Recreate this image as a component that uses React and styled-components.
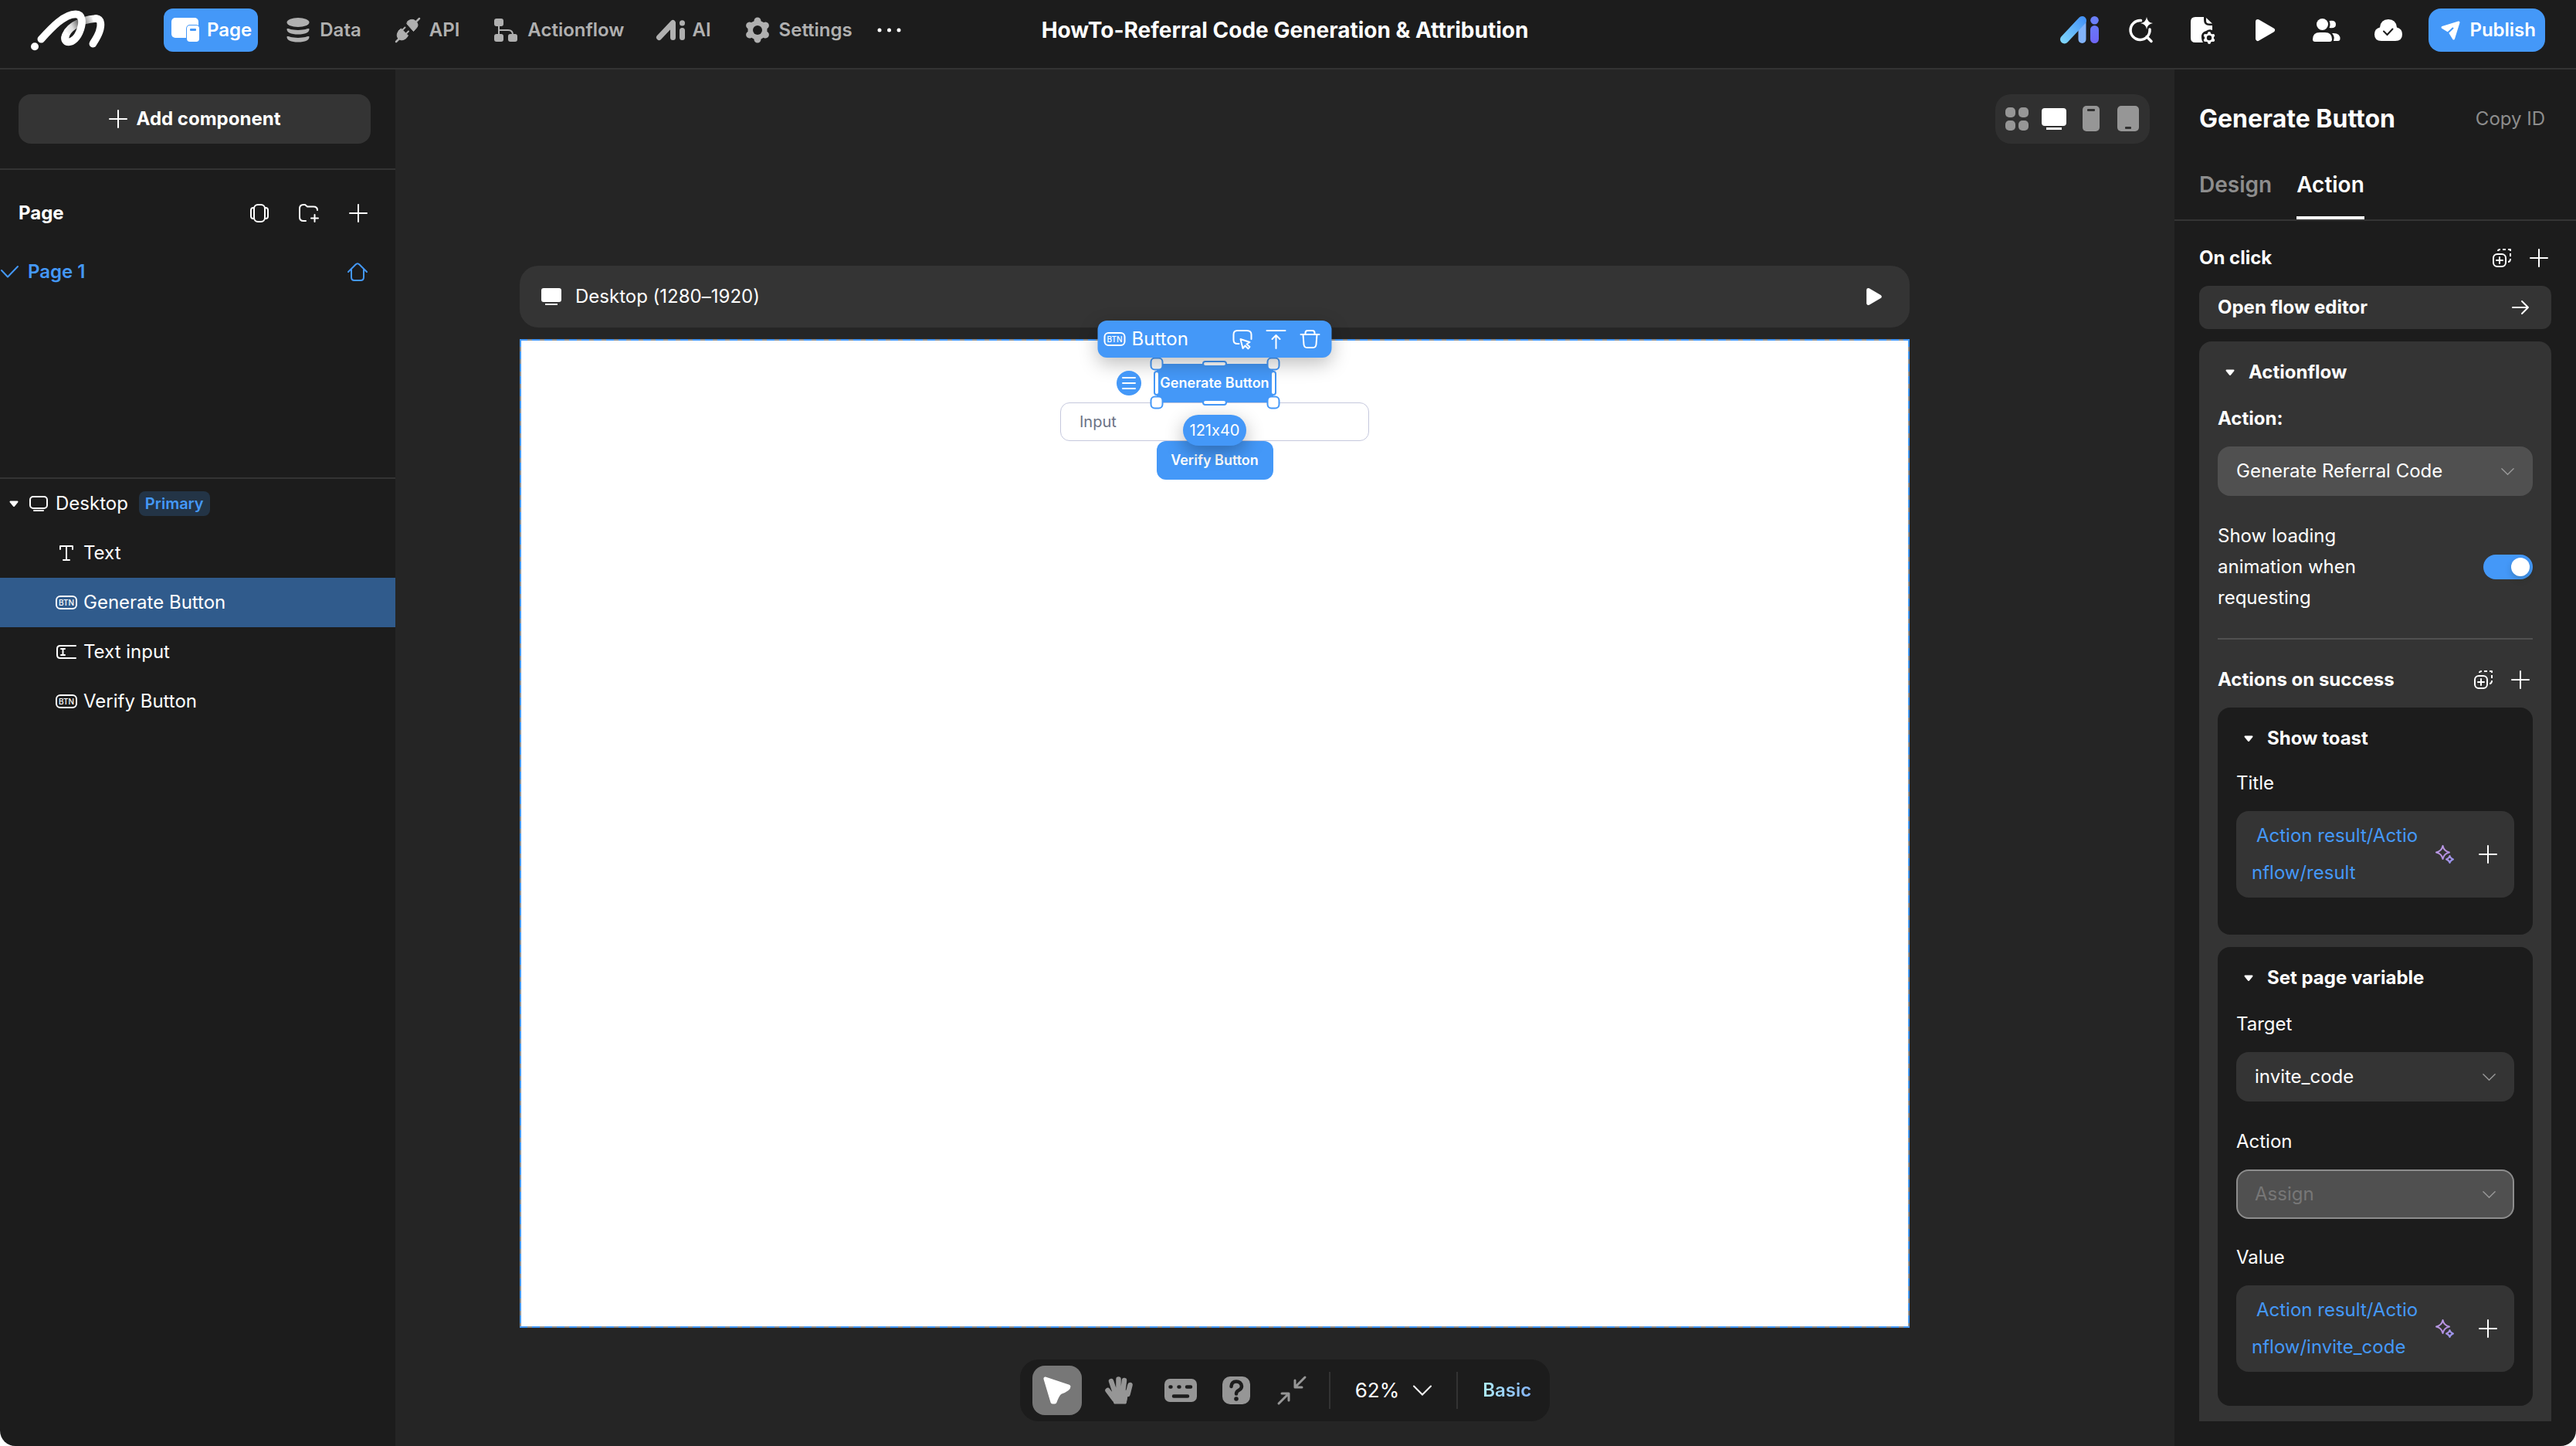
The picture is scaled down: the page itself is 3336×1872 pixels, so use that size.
import React from 'react';
import styled, { createGlobalStyle } from 'styled-components';

const GlobalStyle = createGlobalStyle`
  * {
    box-sizing: border-box;
  }

  body {
    margin: 0;
    background: #fff;
    color: #fff;
    font-family: Inter, 'Open Sans', sans-serif;
    font-size: 24px;
    font-feature-settings: 'calt' 0;
    line-height: 32px;
  }

  button, input, select {
    font: inherit;
    font-feature-settings: inherit;
    color: inherit;
    border: 0;
    margin: 0;
    padding: 0;
    background: none;
  }

  h1, h2, h3, p, ul {
    font-size: inherit;
    font-weight: inherit;
    margin: 0;
    padding: 0;
    list-style: none;
  }

  svg {
    display: block;
    flex: none;
    overflow: visible;
  }
`;

/* ---------- icons ---------- */

const Svg = ({ w = 24, h = 24, children, ...rest }) => (
  <svg width={w} height={h} viewBox={`0 0 ${w} ${h}`} fill='none' aria-hidden='true' {...rest}>
    {children}
  </svg>
);

const Line = ({ children, width = 2, ...rest }) => (
  <Svg stroke='currentColor' strokeWidth={width} strokeLinecap='round' strokeLinejoin='round' {...rest}>
    {children}
  </Svg>
);

const Logo = () => (
  <svg width='96' height='53' viewBox='31 38 288 159' fill='none' aria-hidden='true'>
    <defs>
      <linearGradient id='fold' gradientUnits='userSpaceOnUse' x1='165' y1='130' x2='290' y2='70'>
        <stop offset='0' stopColor='#fff' />
        <stop offset='0.25' stopColor='#ddd' />
        <stop offset='0.45' stopColor='#777' />
        <stop offset='0.65' stopColor='#999' />
        <stop offset='0.9' stopColor='#fff' />
      </linearGradient>
    </defs>
    <g strokeWidth='29' strokeLinecap='round' strokeLinejoin='round'>
      <path d='M164 146C168 112 215 76 284 71' stroke='url(#fold)' />
      <path d='M284 71C306 72 305 98 297 122C290 142 280 156 272 169' stroke='#fff' />
      <path
        d='M71 151C112 106 160 54 205 54C234 54 232 88 224 112C212 148 192 162 178 162C164 162 160 150 165 138'
        stroke='#fff'
      />
    </g>
    <circle cx='46' cy='180' r='15' fill='#fff' />
  </svg>
);

const PageIcon = () => (
  <Svg w={36} h={32}>
    <rect x='0' y='0' width='35' height='26' rx='5' fill='#fff' />
    <rect x='19' y='9' width='18' height='23' rx='5' fill='#4498f8' />
    <rect x='20' y='10' width='16' height='21' rx='4' fill='#fff' />
    <rect x='24' y='14' width='8' height='3' rx='1' fill='#4498f8' />
  </Svg>
);

const DataIcon = () => (
  <Svg w={30} h={32} fill='currentColor'>
    <ellipse cx='15' cy='6' rx='14.5' ry='6' />
    <path d='M.5 14.5C2 13 4 16 15 16S28 13 29.5 14.5C30 19 24 21.5 15 21.5S0 19 .5 14.5z' />
    <path d='M.5 24.5C2 23 4 26 15 26S28 23 29.5 24.5C30 29 24 31.5 15 31.5S0 29 .5 24.5z' />
  </Svg>
);

const ApiIcon = () => (
  <Svg w={32} h={32} fill='currentColor' stroke='currentColor' strokeLinecap='round' strokeLinejoin='round'>
    <path d='M16 4.5Q22 0 26.5 4.5T27.5 13L23.5 17.5L15 8z' strokeWidth='1' />
    <path d='M27 5l4-4M1 31l4-4' strokeWidth='2.5' />
    <path d='M4.5 16.5L7.5 14L16.5 23L14 26.5Q8 31 4 27T4.5 16.5z' strokeWidth='1' />
    <path d='M9 16l3.5-3.5M13.5 21l3.5-3.5' strokeWidth='2' />
  </Svg>
);

const FlowIcon = () => (
  <Svg w={30} h={30}>
    <g fill='currentColor'>
      <rect x='0' y='0' width='12' height='10' rx='3' />
      <rect x='0' y='20' width='12' height='10' rx='3' />
      <rect x='18' y='20' width='12' height='10' rx='3' />
    </g>
    <path d='M6 8v14M6 15h12q6 0 6 6' stroke='currentColor' strokeWidth='2' />
  </Svg>
);

const AiIcon = () => (
  <Svg w={37} h={26} stroke='currentColor' strokeWidth='7' strokeLinecap='round'>
    <path d='M3.5 22.5L21.5 3.5V22.5M33.5 13.5v9M33.5 3.7v.2' strokeLinejoin='round' />
  </Svg>
);

const GearIcon = () => (
  <Svg w={34} h={34}>
    <path
      d='M17 5v24M6.6 11l20.8 12M6.6 23l20.8-12'
      stroke='currentColor'
      strokeWidth='9'
      strokeLinecap='round'
    />
    <circle cx='17' cy='17' r='12.5' fill='currentColor' />
    <circle cx='17' cy='17' r='6' fill='#1c1c1c' />
  </Svg>
);

const DotsIcon = () => (
  <Svg w={32} h={6} fill='#fff'>
    <circle cx='3' cy='3' r='2.5' />
    <circle cx='15.5' cy='3' r='2.5' />
    <circle cx='28' cy='3' r='2.5' />
  </Svg>
);

const AiColorIcon = () => (
  <Svg w={50} h={36} strokeLinecap='round'>
    <defs>
      <linearGradient id='aiSlope' gradientUnits='userSpaceOnUse' x1='2' y1='33' x2='32' y2='4'>
        <stop offset='0' stopColor='#7fd6fb' />
        <stop offset='1' stopColor='#4594f8' />
      </linearGradient>
      <linearGradient id='aiLetter' gradientUnits='userSpaceOnUse' x1='40' y1='0' x2='48' y2='34'>
        <stop offset='0' stopColor='#6584f8' />
        <stop offset='1' stopColor='#6f66f7' />
      </linearGradient>
    </defs>
    <path d='M28.5 7V30' stroke='#82b3f9' strokeWidth='10' />
    <path d='M5.5 30L28.5 5.5' stroke='url(#aiSlope)' strokeWidth='11' />
    <rect x='39' y='12' width='11' height='23' rx='5.5' fill='url(#aiLetter)' />
    <circle cx='44.5' cy='5.3' r='5.3' fill='#6b7ff8' />
  </Svg>
);

const SearchSparkIcon = () => (
  <Svg w={32} h={34}>
    <path
      d='M15.5 4.5A12.5 12.5 0 1 0 27 16M23 25.5l6 6'
      stroke='#fff'
      strokeWidth='3.5'
      strokeLinecap='round'
    />
    <path d='M23 0Q24 7 31 8Q24 9 23 16Q22 9 15 8Q22 7 23 0z' fill='#fff' />
  </Svg>
);

const DocGearIcon = () => (
  <Svg w={32} h={35}>
    <path
      d='M6 0H17V4Q17 11 24 11H28V17Q24 15 20 18Q13 20 14 27Q14 30 16 33H6Q0 33 0 27V6Q0 0 6 0z'
      fill='#fff'
    />
    <path d='M20 1L28 8.5H24Q20 8.5 20 5z' fill='#fff' />
    <g transform='translate(24 27)'>
      <path d='M0-6V6M-5.2-3L5.2 3M-5.2 3L5.2-3' stroke='#fff' strokeWidth='4' strokeLinecap='round' />
      <circle r='6' fill='#fff' />
      <circle r='3.2' fill='#1c1c1c' />
    </g>
  </Svg>
);

const PlayIcon = ({ small }) => (
  <svg width={small ? 20 : 25} height={small ? 22 : 28} viewBox='0 0 25 28' aria-hidden='true'>
    <path
      d='M3 3L22 14L3 25z'
      fill='#fff'
      stroke='#fff'
      strokeWidth='6'
      strokeLinejoin='round'
    />
  </svg>
);

const PeopleIcon = () => (
  <Svg w={36} h={30} fill='#fff'>
    <circle cx='12.5' cy='7.5' r='7.5' />
    <path d='M21.5 3Q30 1.5 30 7.5T21.5 12Q23.5 7.5 21.5 3z' />
    <path d='M9 18H16Q25 18 25 27Q25 30 22 30H3Q0 30 0 27Q0 18 9 18z' />
    <path d='M25 19H27Q36 19 35.5 27Q35 29 33 29H27Q29 23 25 19z' />
  </Svg>
);

const CloudIcon = () => (
  <Svg w={36} h={28}>
    <path d='M9 28Q0 28 0 19.5Q0 12 7 10.5Q8 0 18 0T29 10.5Q36 12 36 19.5Q36 28 27 28z' fill='#fff' />
    <path d='M12 15.5l4.5 4.5l7-7.5' stroke='#1c1c1c' strokeWidth='2' strokeLinecap='round' />
  </Svg>
);

const PlaneIcon = () => (
  <Svg w={25} h={25}>
    <path d='M2 8.5L23 2L16.5 23L11 14z' fill='#fff' stroke='#fff' strokeWidth='3' strokeLinejoin='round' />
    <path d='M9 15.5l7-6.5' stroke='#4498f8' strokeWidth='2' />
  </Svg>
);

const PlusIcon = () => (
  <Line>
    <path d='M12 1v22M1 12h22' />
  </Line>
);

const StackIcon = () => (
  <Line>
    <rect x='5' y='1' width='14' height='22' rx='5' />
    <path d='M5 5H4Q1 5 1 8V16Q1 19 4 19H5M19 5H20Q23 5 23 8V16Q23 19 20 19H19' />
  </Line>
);

const FolderPlusIcon = () => (
  <Line w={26}>
    <path d='M9 22H6Q1 22 1 17V6Q1 1 6 1H8L11 3.5H19Q24 3.5 24 8M20.5 14v9M16 18.5h9' />
  </Line>
);

const CheckIcon = () => (
  <Line w={22} h={16}>
    <path d='M2 6l8 8.5L23 1' />
  </Line>
);

const HomeIcon = () => (
  <Line w={26}>
    <path d='M1 12L10.5 2.5Q13 0 15.5 2.5L25 12M5 9V19Q5 23 9 23H17Q21 23 21 19V9' />
  </Line>
);

const CaretIcon = () => (
  <Svg w={12} h={9}>
    <path d='M1.5 1.5H10.5L6 7z' fill='#fff' stroke='#fff' strokeWidth='2' strokeLinejoin='round' />
  </Svg>
);

const MonitorLineIcon = () => (
  <Line h={20}>
    <rect x='1' y='1' width='22' height='15' rx='4' />
    <path d='M6 19h12' />
  </Line>
);

const MonitorIcon = ({ large }) =>
  large ? (
    <Svg w={34} h={28}>
      <path d='M5 0H29Q33 0 33 4V19Q33 23 29 23H5Q1 23 1 19V4Q1 0 5 0zM7 25H27V28H7z' fill='#fff' />
    </Svg>
  ) : (
    <Svg w={26} h={22}>
      <path d='M3 0H23Q26 0 26 3V15Q26 18 23 18H3Q0 18 0 15V3Q0 0 3 0zM5 20H21V22H5z' fill='#fff' />
    </Svg>
  );

const TextIcon = () => (
  <Line w={18} h={20}>
    <path d='M1 5V1H17V5M9 1V19M5 19h8' />
  </Line>
);

const InputIcon = () => (
  <Line w={26} h={18}>
    <path d='M25 1H5Q1 1 1 5V13Q1 17 5 17H25M6 5h5M6 13h5M8.5 5v8' />
  </Line>
);

const GridIcon = () => (
  <Svg w={30} h={30} fill='#969696'>
    <rect x='0' y='0' width='13' height='13' rx='5' />
    <rect x='17' y='0' width='13' height='13' rx='5' />
    <rect x='0' y='17' width='13' height='13' rx='5' />
    <rect x='17' y='17' width='13' height='13' rx='5' />
  </Svg>
);

const PhoneIcon = () => (
  <Svg w={24} h={34}>
    <rect x='1' y='0' width='22' height='33' rx='5' fill='#969696' />
    <rect x='7' y='4' width='10' height='3' rx='1' fill='#303030' />
  </Svg>
);

const TabletIcon = () => (
  <Svg w={28} h={34}>
    <rect x='0' y='0' width='28' height='33' rx='5' fill='#969696' />
    <rect x='10' y='27' width='8' height='3' rx='1' fill='#303030' />
  </Svg>
);

const ClickIcon = () => (
  <Line w={25} h={25}>
    <path d='M8 18H6Q1 18 1 13V6Q1 1 6 1H18Q24 1 24 6V12' />
    <path d='M10 12L22 16L18 18.5L22 22L20 24.5L16 20.5L13 24z' />
  </Line>
);

const ToTopIcon = () => (
  <Line>
    <path d='M0 1h24M12 24V7M7 12l5-5l5 5' />
  </Line>
);

const TrashIcon = () => (
  <Line>
    <path d='M0 6h24M6 6V4Q6 1 9 1H15Q18 1 18 4V6M3 6L4 19Q4.5 23 8 23H16Q19.5 23 20 19L21 6' />
  </Line>
);

const MenuIcon = () => (
  <Line w={16} h={16}>
    <path d='M0 1h16M0 8h16M0 15h16' />
  </Line>
);

const ArrowIcon = () => (
  <Line w={24} h={20}>
    <path d='M2 10h20M14 2l8 8l-8 8' />
  </Line>
);

const CopyPlusIcon = () => (
  <Line>
    <rect x='1' y='7' width='16' height='16' rx='5' />
    <path d='M9 11v8M5 15h8' />
    <path d='M7 3Q7 1 10 1M13 1h4M20 1h3v2M23 6v4M23 13Q23 17 20 17' strokeLinecap='butt' />
  </Line>
);

const ChevronIcon = ({ large }) => (
  <svg width={large ? 24 : 17} height={large ? 14 : 9} viewBox='0 0 24 13' fill='none' aria-hidden='true'>
    <path d='M1 1l11 11L23 1' stroke='currentColor' strokeWidth='2' strokeLinecap='round' />
  </svg>
);

const SparkleIcon = () => (
  <Svg stroke='url(#spark)' strokeWidth='2' strokeLinejoin='round'>
    <defs>
      <linearGradient id='spark' gradientUnits='userSpaceOnUse' x1='0' y1='2' x2='24' y2='24'>
        <stop offset='0' stopColor='#b3a0ea' />
        <stop offset='0.4' stopColor='#ba8fdc' />
        <stop offset='1' stopColor='#9095ee' />
      </linearGradient>
    </defs>
    <path d='M9.5 1Q11 8 18 9.5Q11 11 9.5 18Q8 11 1 9.5Q8 8 9.5 1z' />
    <path d='M18.5 14Q19.5 17.5 23 18.5Q19.5 19.5 18.5 23Q17.5 19.5 14 18.5Q17.5 17.5 18.5 14z' />
  </Svg>
);

const CursorIcon = () => (
  <Svg w={36} h={36}>
    <path
      d='M3 3L33 13Q33 17 22 20.5Q18 24 15 33H12z'
      fill='#fff'
      stroke='#fff'
      strokeWidth='5'
      strokeLinejoin='round'
    />
  </Svg>
);

const HandIcon = () => (
  <Svg w={36} h={36} stroke='#969696' strokeLinecap='round'>
    <path d='M8 6l5 15M17.5 3.5v17M25 5l-2 16M32.5 11l-3 12M3.5 18l9 12' strokeWidth='6.5' />
    <path d='M10 19L30 18L28 31L27 35H12L11 31L6 24z' fill='#969696' strokeWidth='1' />
  </Svg>
);

const KeyboardIcon = () => (
  <Svg w={42} h={30}>
    <rect width='42' height='30' rx='7' fill='#969696' />
    <path
      d='M7.5 10.5h1M18.5 10.5h1M29 10.5h5M12 22.5h18'
      stroke='#1c1c1c'
      strokeWidth='4.5'
      strokeLinecap='round'
    />
  </Svg>
);

const HelpIcon = () => (
  <Svg w={36} h={36}>
    <rect width='36' height='36' rx='10' fill='#969696' />
    <path
      d='M11.5 13Q12 6.5 18 6.5T25 12.5Q25 16 21 18Q18 19.5 18 22.5'
      stroke='#1c1c1c'
      strokeWidth='4.5'
      strokeLinecap='round'
    />
    <circle cx='18' cy='29' r='2.8' fill='#1c1c1c' />
  </Svg>
);

const CollapseIcon = () => (
  <Line w={36} h={36} width={3}>
    <path d='M35 1L23 13M22 5v9h9M1 35L13 23M5 22h9v9' />
  </Line>
);

/* ---------- shell ---------- */

const Page = styled.div`
  min-height: 100vh;
  display: flex;
  flex-direction: column;
  background: #1c1c1c;
  border-radius: 0 0 20px 20px;
  overflow: hidden;
`;

const Header = styled.header`
  display: grid;
  grid-template-columns: 1fr auto 1fr;
  align-items: center;
  padding: 0 40px 10px;
  height: 90px;
  border-bottom: 2px solid #333;
`;

const HeaderTitle = styled.h1`
  padding-right: 8px;
  font-size: 28px;
  font-weight: 700;
  white-space: nowrap;
`;

const Nav = styled.nav`
  display: flex;
  align-items: center;
  gap: 24px;
`;

const LogoLink = styled.a`
  margin-right: 52px;
`;

const NavLink = styled.a`
  display: flex;
  align-items: center;
  gap: 10px;
  height: 56px;
  padding: 0 8px 0 10px;
  border-radius: 12px;
  font-weight: 600;
  color: ${(p) => (p.$active ? '#fff' : '#b0b0b0')};
  background: ${(p) => (p.$active ? '#4498f8' : 'transparent')};
  text-decoration: none;
`;

const NavIcon = styled.span`
  display: flex;
  justify-content: center;
  width: 36px;
`;

const IconButton = styled.button`
  display: flex;
  align-items: center;
  justify-content: center;
  width: ${(p) => p.$width || p.$size || 24}px;
  height: ${(p) => p.$size || 24}px;
  border-radius: 16px;
  color: ${(p) => p.$color || '#fff'};
  background: ${(p) => (p.$active ? '#777' : 'transparent')};
`;

const HeaderTools = styled.div`
  display: flex;
  align-items: center;
  justify-content: flex-end;
  gap: 24px;
`;

const PublishButton = styled.button`
  display: flex;
  align-items: center;
  gap: 12px;
  height: 56px;
  padding: 0 12px 0 16px;
  border-radius: 16px;
  background: #4498f8;
  font-weight: 600;
`;

const Body = styled.div`
  flex: 1;
  display: grid;
  grid-template-columns: 512px 1fr 520px;
`;

/* ---------- left sidebar ---------- */

const Sidebar = styled.aside`
  display: flex;
  flex-direction: column;
`;

const AddArea = styled.div`
  padding: 32px 32px 32px 24px;
  border-bottom: 2px solid #333;
`;

const AddButton = styled.button`
  display: flex;
  align-items: center;
  justify-content: center;
  gap: 12px;
  width: 100%;
  height: 64px;
  border-radius: 16px;
  background: #343434;
  font-weight: 700;
`;

const PagesArea = styled.section`
  height: 400px;
  padding: 36px 36px 0 24px;
  border-bottom: 2px solid #333;
`;

const SectionHead = styled.div`
  display: flex;
  align-items: center;
  justify-content: space-between;
  height: 40px;
  font-weight: 700;
`;

const IconGroup = styled.div`
  display: flex;
  gap: ${(p) => p.$gap || 40}px;
`;

const PageRow = styled.a`
  display: flex;
  align-items: center;
  gap: 14px;
  height: 40px;
  margin: 36px 0 0 -24px;
  color: #4498f8;
  font-weight: 600;
  text-decoration: none;

  svg:last-child {
    margin-left: auto;
  }
`;

const TreeRow = styled.li`
  display: flex;
  align-items: center;
  gap: 8px;
  height: 64px;
  padding-left: 72px;
  background: ${(p) => (p.$selected ? '#305b8c' : 'transparent')};
`;

const TreeRoot = styled(TreeRow)`
  gap: 10px;
  padding-left: 12px;

  svg:first-child {
    margin-right: 4px;
  }
`;

const TreeIcon = styled.span`
  display: flex;
  justify-content: center;
  width: 28px;
`;

const PrimaryBadge = styled.span`
  margin-left: 4px;
  padding: 0 8px;
  border-radius: 8px;
  background: #233446;
  color: #4498f8;
  font-size: 20px;
  font-weight: 600;
`;

const BtnGlyph = styled.span`
  display: flex;
  align-items: center;
  justify-content: center;
  width: 28px;
  height: 18px;
  border: 2px solid #fff;
  border-radius: 6px;
  font-size: 10px;
  font-weight: 500;
  line-height: 12px;
`;

/* ---------- canvas ---------- */

const Canvas = styled.main`
  display: flex;
  flex-direction: column;
  align-items: center;
  min-width: 0;
  padding: 32px 0;
  background: #252525;
`;

const DeviceSwitch = styled.div`
  display: flex;
  align-self: flex-end;
  align-items: center;
  height: 64px;
  margin-right: 32px;
  padding: 0 4px;
  border-radius: 20px;
  background: #303030;
`;

const Frame = styled.section`
  flex: 1;
  display: flex;
  flex-direction: column;
  align-self: stretch;
  gap: 15px;
  margin: 158px 343px 41px 161px;
`;

const FrameHeader = styled.div`
  display: flex;
  align-items: center;
  gap: 18px;
  height: 80px;
  padding: 0 36px 0 28px;
  border-radius: 24px;
  background: #343434;

  button {
    margin-left: auto;
  }
`;

const Artboard = styled.div`
  --dash: #4498f8 0 10px, #909090 10px 16px;
  flex: 1;
  display: flex;
  flex-direction: column;
  align-items: center;
  padding-top: 32px;
  background:
    repeating-linear-gradient(90deg, var(--dash)) top / 100% 2px no-repeat,
    repeating-linear-gradient(90deg, var(--dash)) bottom / 100% 2px no-repeat,
    repeating-linear-gradient(180deg, var(--dash)) left / 2px 100% no-repeat,
    repeating-linear-gradient(180deg, var(--dash)) right / 2px 100% no-repeat,
    #fff;
`;

const Selection = styled.div`
  position: relative;
  z-index: 1;
`;

const CanvasButton = styled.button`
  display: block;
  width: 151px;
  height: 50px;
  border-radius: ${(p) => (p.$square ? 0 : 12)}px;
  background: #4498f8;
  font-size: 18px;
  font-weight: 600;
  white-space: nowrap;
`;

const CanvasInput = styled.input`
  width: 400px;
  height: 50px;
  padding: 0 24px;
  border: 1px solid #c5c8dd;
  border-radius: 12px;
  font-size: 20px;

  &::placeholder {
    color: #6b7285;
    opacity: 1;
  }
`;

const SelectionBar = styled.div`
  position: absolute;
  left: 50%;
  bottom: 58px;
  display: flex;
  align-items: center;
  gap: 20px;
  width: 303px;
  height: 48px;
  padding: 0 16px 0 8px;
  border-radius: 12px;
  background: #4498f8;
  box-shadow: 0 8px 24px rgba(0, 0, 0, 0.25);
  transform: translateX(-50%);
`;

const SelectionName = styled.span`
  display: flex;
  align-items: center;
  gap: 8px;
  margin-right: auto;
`;

const DragHandle = styled.button`
  position: absolute;
  left: -52px;
  top: 9px;
  display: flex;
  align-items: center;
  justify-content: center;
  width: 32px;
  height: 32px;
  border-radius: 50%;
  background: #4498f8;
`;

const SizeLabel = styled.span`
  position: absolute;
  left: 50%;
  top: 66px;
  width: 82px;
  height: 40px;
  border-radius: 20px;
  background: #4498f8;
  box-shadow: 0 8px 24px rgba(0, 0, 0, 0.3);
  font-size: 20px;
  line-height: 40px;
  text-align: center;
  transform: translateX(-50%);
`;

const Handle = styled.span`
  position: absolute;
  left: ${(p) => p.$x}%;
  top: ${(p) => p.$y}%;
  width: ${(p) => p.$w}px;
  height: ${(p) => p.$h}px;
  border: 2px solid #4498f8;
  border-radius: ${(p) => (p.$w === p.$h ? 6 : 4)}px;
  background: #fff;
  transform: translate(-50%, -50%);
`;

const handles = [
  [50, 0, 32, 8],
  [50, 100, 32, 8],
  [0, 50, 8, 32],
  [100, 50, 8, 32],
  [0, 0, 17, 17],
  [100, 0, 17, 17],
  [0, 100, 17, 17],
  [100, 100, 17, 17],
];

const BottomBar = styled.div`
  display: flex;
  align-items: center;
  height: 80px;
  padding: 0 24px 0 16px;
  border-radius: 24px;
  background: #1c1c1c;
`;

const BottomTools = styled.div`
  display: flex;
  align-items: center;
  gap: 16px;
  padding-right: 16px;
`;

const Divider = styled.span`
  width: 2px;
  height: 48px;
  background: #333;
`;

const ZoomButton = styled.button`
  display: flex;
  align-items: center;
  gap: 18px;
  padding: 0 32px;
  font-size: 26px;
`;

const PlanLink = styled.a`
  padding-left: 32px;
  background: linear-gradient(90deg, #aeeaf6 32px, #84b4f8);
  background-clip: text;
  color: transparent;
  font-weight: 600;
  text-decoration: none;
`;

/* ---------- right panel ---------- */

const Panel = styled.aside`
  padding-bottom: 32px;
`;

const PanelHead = styled.div`
  display: flex;
  align-items: center;
  justify-content: space-between;
  padding: 44px 40px 0 32px;

  h2 {
    font-size: 32px;
    font-weight: 700;
    line-height: 40px;
  }

  button {
    color: #8d8d8d;
  }
`;

const Tabs = styled.div`
  display: flex;
  gap: 32px;
  height: 112px;
  padding: 44px 32px 0;
  border-bottom: 2px solid #343434;
`;

const Tab = styled.button`
  border-bottom: 4px solid ${(p) => (p.$active ? '#fff' : 'transparent')};
  color: ${(p) => (p.$active ? '#fff' : '#8d8d8d')};
  font-size: 28px;
  font-weight: 600;
  padding-bottom: 20px;
`;

const PanelBody = styled.div`
  padding: 28px 32px 0;

  > ${SectionHead} {
    padding-right: 4px;
  }
`;

const FlowEditorButton = styled.button`
  display: flex;
  align-items: center;
  justify-content: space-between;
  width: 100%;
  height: 56px;
  margin: 16px 0;
  padding: 0 28px 0 24px;
  border-radius: 12px;
  background: #343434;
  font-weight: 700;
`;

const ActionCard = styled.section`
  padding: 20px 24px;
  border-radius: 16px 16px 0 0;
  background: #343434;
`;

const CardTitle = styled.h3`
  display: flex;
  align-items: center;
  gap: 18px;
  height: 40px;
  padding-left: 10px;
  font-weight: 700;
`;

const FieldLabel = styled.label`
  display: block;
  height: 32px;
  margin: ${(p) => p.$top}px 0 20px;
  font-weight: ${(p) => (p.$bold ? 700 : 400)};
`;

const SelectBox = styled.div`
  display: grid;
  align-items: center;
  color: #9a9a9a;

  > * {
    grid-area: 1 / 1;
  }

  svg {
    justify-self: end;
    margin-right: 24px;
    pointer-events: none;
  }
`;

const Select = styled.select`
  appearance: none;
  width: 100%;
  height: 64px;
  padding: 0 24px;
  border-radius: 16px;
  background: ${(p) => (p.$light ? '#505050' : '#343434')};
  color: #fff;
  opacity: 1;

  &:disabled {
    padding: 0 22px;
    border: 2px solid #8d8d8d;
    color: #777;
  }
`;

const ToggleRow = styled.label`
  display: flex;
  align-items: center;
  justify-content: space-between;
  margin-top: 32px;
  padding-bottom: 32px;
  border-bottom: 2px solid #505050;
  line-height: 40px;

  span {
    width: 200px;
  }
`;

const Toggle = styled.input`
  appearance: none;
  display: flex;
  justify-content: flex-start;
  width: 64px;
  height: 32px;
  padding: 4px;
  border-radius: 16px;
  background: #777;

  &:checked {
    justify-content: flex-end;
    background: #4498f8;
  }

  &::before {
    content: '';
    width: 24px;
    height: 24px;
    border-radius: 50%;
    background: #fff;
    box-shadow: 0 4px 8px rgba(0, 35, 11, 0.2);
  }
`;

const SuccessHead = styled(SectionHead)`
  margin: 32px 0 16px;
  padding-right: 4px;
`;

const SubCard = styled.section`
  padding: 20px 24px ${(p) => p.$bottom}px;
  border-radius: 16px;
  background: #1c1c1c;

  & + & {
    margin-top: 16px;
  }
`;

const ValueBox = styled.div`
  display: flex;
  align-items: center;
  height: 112px;
  padding: 0 22px 0 20px;
  border-radius: 16px;
  background: #343434;
  line-height: 48px;

  p {
    width: 222px;
    margin-right: auto;
    color: #4498f8;
    text-indent: 6px;
    word-break: break-all;
  }
`;

const Dropdown = ({ id, value, light, disabled }) => (
  <SelectBox>
    <Select id={id} $light={light} disabled={disabled} defaultValue={value}>
      <option>{value}</option>
    </Select>
    <ChevronIcon />
  </SelectBox>
);

const ValueField = ({ children }) => (
  <ValueBox>
    <p>{children}</p>
    <IconGroup $gap={32}>
      <IconButton aria-label='Generate with AI'>
        <SparkleIcon />
      </IconButton>
      <IconButton aria-label='Add value'>
        <PlusIcon />
      </IconButton>
    </IconGroup>
  </ValueBox>
);

const navItems = [
  { label: 'Page', icon: <PageIcon />, active: true },
  { label: 'Data', icon: <DataIcon /> },
  { label: 'API', icon: <ApiIcon /> },
  { label: 'Actionflow', icon: <FlowIcon /> },
  { label: 'AI', icon: <AiIcon /> },
  { label: 'Settings', icon: <GearIcon /> },
];

const headerTools = [
  { label: 'AI assistant', icon: <AiColorIcon /> },
  { label: 'Search', icon: <SearchSparkIcon /> },
  { label: 'Page settings', icon: <DocGearIcon /> },
  { label: 'Preview', icon: <PlayIcon /> },
  { label: 'Collaborators', icon: <PeopleIcon /> },
  { label: 'Saved', icon: <CloudIcon /> },
];

const treeItems = [
  { label: 'Text', icon: <TextIcon /> },
  { label: 'Generate Button', icon: <BtnGlyph>BTN</BtnGlyph>, selected: true },
  { label: 'Text input', icon: <InputIcon /> },
  { label: 'Verify Button', icon: <BtnGlyph>BTN</BtnGlyph> },
];

const TopBar = () => (
  <Header>
    <Nav>
      <LogoLink href='#home' aria-label='Home'>
        <Logo />
      </LogoLink>
      {navItems.map((item) => (
        <NavLink key={item.label} href={`#${item.label}`} $active={item.active}>
          <NavIcon>{item.icon}</NavIcon>
          {item.label}
        </NavLink>
      ))}
      <button aria-label='More'>
        <DotsIcon />
      </button>
    </Nav>
    <HeaderTitle>HowTo-Referral Code Generation &amp; Attribution</HeaderTitle>
    <HeaderTools>
      {headerTools.map((tool) => (
        <IconButton key={tool.label} $size={56} aria-label={tool.label}>
          {tool.icon}
        </IconButton>
      ))}
      <PublishButton>
        <PlaneIcon />
        Publish
      </PublishButton>
    </HeaderTools>
  </Header>
);

const LeftSidebar = () => (
  <Sidebar>
    <AddArea>
      <AddButton>
        <PlusIcon />
        Add component
      </AddButton>
    </AddArea>
    <PagesArea>
      <SectionHead>
        <h2>Page</h2>
        <IconGroup>
          <IconButton aria-label='Carousel'>
            <StackIcon />
          </IconButton>
          <IconButton aria-label='New folder'>
            <FolderPlusIcon />
          </IconButton>
          <IconButton aria-label='New page'>
            <PlusIcon />
          </IconButton>
        </IconGroup>
      </SectionHead>
      <PageRow href='#page-1'>
        <CheckIcon />
        Page 1
        <HomeIcon />
      </PageRow>
    </PagesArea>
    <ul>
      <TreeRoot>
        <CaretIcon />
        <MonitorLineIcon />
        Desktop
        <PrimaryBadge>Primary</PrimaryBadge>
      </TreeRoot>
      {treeItems.map((item) => (
        <TreeRow key={item.label} $selected={item.selected}>
          <TreeIcon>{item.icon}</TreeIcon>
          {item.label}
        </TreeRow>
      ))}
    </ul>
  </Sidebar>
);

const Workspace = () => (
  <Canvas>
    <DeviceSwitch>
      <IconButton $size={48} aria-label='All devices'>
        <GridIcon />
      </IconButton>
      <IconButton $size={48} aria-label='Desktop'>
        <MonitorIcon large />
      </IconButton>
      <IconButton $size={48} aria-label='Phone'>
        <PhoneIcon />
      </IconButton>
      <IconButton $size={48} aria-label='Tablet'>
        <TabletIcon />
      </IconButton>
    </DeviceSwitch>
    <Frame>
      <FrameHeader>
        <MonitorIcon />
        Desktop (1280–1920)
        <button aria-label='Preview desktop'>
          <PlayIcon small />
        </button>
      </FrameHeader>
      <Artboard>
        <Selection>
          <CanvasButton $square>Generate Button</CanvasButton>
          {handles.map(([x, y, w, h]) => (
            <Handle key={`${x}-${y}`} $x={x} $y={y} $w={w} $h={h} />
          ))}
          <SelectionBar>
            <SelectionName>
              <BtnGlyph>BTN</BtnGlyph>
              Button
            </SelectionName>
            <IconButton aria-label='Select parent'>
              <ClickIcon />
            </IconButton>
            <IconButton aria-label='Move to top'>
              <ToTopIcon />
            </IconButton>
            <IconButton aria-label='Delete'>
              <TrashIcon />
            </IconButton>
          </SelectionBar>
          <DragHandle aria-label='Options'>
            <MenuIcon />
          </DragHandle>
          <SizeLabel>121x40</SizeLabel>
        </Selection>
        <CanvasInput placeholder='Input' aria-label='Input' />
        <CanvasButton>Verify Button</CanvasButton>
      </Artboard>
    </Frame>
    <BottomBar>
      <BottomTools>
        <IconButton $size={64} $active aria-label='Select'>
          <CursorIcon />
        </IconButton>
        <IconButton $size={64} aria-label='Pan'>
          <HandIcon />
        </IconButton>
        <IconButton $size={64} aria-label='Shortcuts'>
          <KeyboardIcon />
        </IconButton>
        <IconButton $size={64} $width={48} aria-label='Help'>
          <HelpIcon />
        </IconButton>
        <IconButton $size={64} $color='#969696' aria-label='Fit'>
          <CollapseIcon />
        </IconButton>
      </BottomTools>
      <Divider />
      <ZoomButton>
        62%
        <ChevronIcon large />
      </ZoomButton>
      <Divider />
      <PlanLink href='#plan'>Basic</PlanLink>
    </BottomBar>
  </Canvas>
);

const ActionPanel = () => (
  <Panel>
    <PanelHead>
      <h2>Generate Button</h2>
      <button>Copy ID</button>
    </PanelHead>
    <Tabs>
      <Tab>Design</Tab>
      <Tab $active>Action</Tab>
    </Tabs>
    <PanelBody>
      <SectionHead>
        <h3>On click</h3>
        <IconGroup $gap={24}>
          <IconButton aria-label='Copy actions'>
            <CopyPlusIcon />
          </IconButton>
          <IconButton aria-label='Add action'>
            <PlusIcon />
          </IconButton>
        </IconGroup>
      </SectionHead>
      <FlowEditorButton>
        Open flow editor
        <ArrowIcon />
      </FlowEditorButton>
      <ActionCard>
        <CardTitle>
          <CaretIcon />
          Actionflow
        </CardTitle>
        <FieldLabel htmlFor='flow' $top={24} $bold>
          Action:
        </FieldLabel>
        <Dropdown id='flow' value='Generate Referral Code' light />
        <ToggleRow>
          <span>Show loading animation when requesting</span>
          <Toggle type='checkbox' defaultChecked />
        </ToggleRow>
        <SuccessHead>
          <h3>Actions on success</h3>
          <IconGroup $gap={24}>
            <IconButton aria-label='Copy success actions'>
              <CopyPlusIcon />
            </IconButton>
            <IconButton aria-label='Add success action'>
              <PlusIcon />
            </IconButton>
          </IconGroup>
        </SuccessHead>
        <SubCard $bottom={48}>
          <CardTitle>
            <CaretIcon />
            Show toast
          </CardTitle>
          <FieldLabel as='p' $top={22}>
            Title
          </FieldLabel>
          <ValueField>Action result/Actionflow/result</ValueField>
        </SubCard>
        <SubCard $bottom={44}>
          <CardTitle>
            <CaretIcon />
            Set page variable
          </CardTitle>
          <FieldLabel htmlFor='target' $top={24}>
            Target
          </FieldLabel>
          <Dropdown id='target' value='invite_code' />
          <FieldLabel htmlFor='assign' $top={36}>
            Action
          </FieldLabel>
          <Dropdown id='assign' value='Assign' light disabled />
          <FieldLabel as='p' $top={34}>
            Value
          </FieldLabel>
          <ValueField>Action result/Actionflow/invite_code</ValueField>
        </SubCard>
      </ActionCard>
    </PanelBody>
  </Panel>
);

const App = () => (
  <>
    <GlobalStyle />
    <Page>
      <TopBar />
      <Body>
        <LeftSidebar />
        <Workspace />
        <ActionPanel />
      </Body>
    </Page>
  </>
);

export default App;
